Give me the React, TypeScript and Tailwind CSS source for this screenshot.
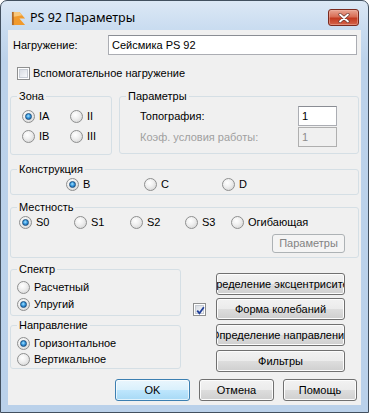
import React from 'react';
import clsx from 'clsx';

const font = "font-['Liberation_Sans',Arial,sans-serif]";

function Radio({ checked, label, className }: { checked?: boolean; label: string; className?: string }) {
  return (
    <div className={clsx('flex items-center h-[13px] shrink-0', className)}>
      <span className="w-[13px] h-[13px] rounded-full border border-[#8e8f8f] bg-[radial-gradient(circle_at_40%_35%,#ffffff_0%,#f0f0f0_40%,#cfcfcf_100%)] flex items-center justify-center shrink-0">
        {checked && (
          <span className="w-[7px] h-[7px] rounded-full border border-[#1c5180] bg-[radial-gradient(circle_at_45%_40%,#a8e4ff_0%,#3a9be0_45%,#0e4f9a_100%)]" />
        )}
      </span>
      <span className="ml-[4px] leading-[13px] whitespace-nowrap">{label}</span>
    </div>
  );
}

function Check({ checked, label, className }: { checked?: boolean; label?: string; className?: string }) {
  return (
    <div className={clsx('flex items-center h-[13px] shrink-0', className)}>
      <span className="w-[13px] h-[13px] border border-[#8e8f8f] bg-white p-[1px] shrink-0">
        <span className="block w-full h-full border border-[#c6cbd3] bg-[linear-gradient(135deg,#d9dde3,#f7f8fa)] relative">
          {checked && (
            <svg viewBox="0 0 9 9" className="absolute left-0 top-0 w-[9px] h-[9px]">
              <path d="M1.2 4.6 L3.4 7.2 L7.8 1.2" fill="none" stroke="#21409a" strokeWidth="1.8" />
            </svg>
          )}
        </span>
      </span>
      {label && <span className="ml-[3px] leading-[13px] whitespace-nowrap">{label}</span>}
    </div>
  );
}

function Group({ title, className, children }: { title: string; className?: string; children?: React.ReactNode }) {
  return (
    <fieldset className={clsx('border border-[#d5dfe5] rounded-[3px] min-w-0', className)}>
      <legend className="ml-[6px] px-[2px] leading-[13px]">{title}</legend>
      {children}
    </fieldset>
  );
}

function Btn({ children, className, disabled, primary }: { children: React.ReactNode; className?: string; disabled?: boolean; primary?: boolean }) {
  return (
    <div
      className={clsx(
        'flex items-center justify-center overflow-hidden whitespace-nowrap rounded-[3px] border shrink-0',
        disabled
          ? 'border-[#adb2b5] bg-[#f4f4f4] text-[#838383]'
          : primary
          ? 'border-[#3c7fb1] bg-[linear-gradient(to_bottom,#eaf6fd_0%,#d9f0fc_50%,#bee6fd_51%,#a7d9f5_100%)] shadow-[inset_0_0_0_1px_#ffffffaa]'
          : 'border-[#707070] bg-[linear-gradient(to_bottom,#f2f2f2_0%,#ebebeb_50%,#dddddd_51%,#cfcfcf_100%)] shadow-[inset_0_0_0_1px_#fcfcfc]',
        className
      )}
    >
      {children}
    </div>
  );
}

export default function App() {
  return (
    <div className={clsx('w-[369px] h-[413px] text-[11px] text-black', font)}>
      <div className="w-full h-full rounded-t-[7px] border border-[#42505f] bg-[linear-gradient(to_bottom,#dce8f5_0px,#c9dcf0_28px,#bcd2ea_60px,#bad1ea_100%)] flex flex-col">
        {/* title bar */}
        <div className="h-[29px] flex items-start shrink-0">
          <svg viewBox="0 0 16 16" className="w-[15px] h-[15px] ml-[10px] mt-[10px]">
            <rect x="1" y="1" width="3" height="14" fill="#b06a2a" />
            <polygon points="3,1 9,1 15,8 9,8 15,15 3,15" fill="#f19a2c" />
            <polygon points="3,1 9,1 12,4.5 3,6" fill="#f8c77b" />
          </svg>
          <span className="ml-[4px] mt-[10px] text-[12.5px] leading-[14px] font-['Noto_Sans',sans-serif] text-black">PS 92 Параметры</span>
          <div className="ml-auto mr-[9px] mt-[8px] w-[31px] h-[17px] rounded-[3px] border border-[#7a2a1e] bg-[linear-gradient(to_bottom,#e9a593_0%,#d86d55_45%,#c23a20_55%,#d5654b_100%)] flex items-center justify-center shadow-[inset_0_0_0_1px_#f0b8aa80]">
            <svg viewBox="0 0 12 10" className="w-[12px] h-[10px]">
              <path d="M2 1.5 L10 8.5 M10 1.5 L2 8.5" stroke="#6b3a33" strokeWidth="3.2" strokeLinecap="round" />
              <path d="M2 1.5 L10 8.5 M10 1.5 L2 8.5" stroke="#ffffff" strokeWidth="1.8" strokeLinecap="round" />
            </svg>
          </div>
        </div>

        {/* client area */}
        <div className="flex-1 mx-[7px] mb-[7px] bg-[#f0f0f0] flex flex-col">
          <div className="flex items-center mt-[5px] pl-[5px] h-[20px]">
            <span className="w-[95px]">Нагружение:</span>
            <div className="w-[249px] h-[20px] border border-[#abadb3] border-t-[#8a8d94] bg-white flex items-center pl-[3px]">Сейсмика PS 92</div>
          </div>

          <Check label="Вспомогательное нагружение" className="mt-[12px] ml-[9px]" />

          <div className="flex mt-[10px] mx-[2px] gap-[7px] items-start">
            <Group title="Зона" className="w-[102px] pb-[11px]">
              <div className="flex flex-col gap-[7px] mt-[7px] pl-[11px]">
                <div className="flex">
                  <Radio checked label="IA" className="w-[48px]" />
                  <Radio label="II" />
                </div>
                <div className="flex">
                  <Radio label="IB" className="w-[48px]" />
                  <Radio label="III" />
                </div>
              </div>
            </Group>
            <Group title="Параметры" className="w-[240px] pb-[6px]">
              <div className="flex flex-col gap-[1px] mt-[3px] pl-[20px]">
                <div className="flex items-center">
                  <span className="w-[158px]">Топография:</span>
                  <div className="w-[39px] h-[20px] border border-[#abadb3] border-t-[#8a8d94] bg-white flex items-center pl-[3px]">1</div>
                </div>
                <div className="flex items-center">
                  <span className="w-[158px] text-[#a0a0a0]">Коэф. условия работы:</span>
                  <div className="w-[39px] h-[20px] border border-[#afafaf] bg-[#f0f0f0] text-[#8d8d8d] flex items-center pl-[3px]">1</div>
                </div>
              </div>
            </Group>
          </div>

          <Group title="Конструкция" className="mt-[8px] mx-[2px] pb-[3px]">
            <div className="flex mt-[2px] pl-[55px]">
              <Radio checked label="B" className="w-[78px]" />
              <Radio label="C" className="w-[78px]" />
              <Radio label="D" />
            </div>
          </Group>

          <Group title="Местность" className="mt-[6px] mx-[2px] pb-[4px]">
            <div className="flex mt-[2px] pl-[8px]">
              <Radio checked label="S0" className="w-[55px]" />
              <Radio label="S1" className="w-[56px]" />
              <Radio label="S2" className="w-[55px]" />
              <Radio label="S3" className="w-[46px]" />
              <Radio label="Огибающая" />
            </div>
            <div className="flex justify-end pr-[13px] mt-[5px]">
              <Btn disabled className="w-[73px] h-[19px]">Параметры</Btn>
            </div>
          </Group>

          <div className="flex mt-[5px] ml-[2px] items-start">
            <div className="w-[171px] flex flex-col gap-[3px]">
              <Group title="Спектр" className="pb-[4px]">
                <div className="flex flex-col gap-[4px] mt-[5px] pl-[6px]">
                  <Radio label="Расчетный" />
                  <Radio checked label="Упругий" />
                </div>
              </Group>
              <Group title="Направление" className="pb-[2px]">
                <div className="flex flex-col gap-[3px] mt-[5px] pl-[6px]">
                  <Radio checked label="Горизонтальное" />
                  <Radio label="Вертикальное" />
                </div>
              </Group>
            </div>
            <Check checked className="ml-[12px] mt-[40px]" />
            <div className="ml-[10px] mt-[10px] flex flex-col">
              <Btn className="w-[129px] h-[22px]">Определение эксцентриситета</Btn>
              <Btn className="w-[129px] h-[22px] mt-[3px]">Форма колебаний</Btn>
              <Btn className="w-[129px] h-[22px] mt-[4px]">Определение направления</Btn>
              <Btn className="w-[129px] h-[22px] mt-[4px]">Фильтры</Btn>
            </div>
          </div>

          <div className="flex justify-end mt-[7px] pr-[4px]">
            <Btn primary className="w-[75px] h-[22px]">OK</Btn>
            <Btn className="w-[75px] h-[22px] ml-[9px]">Отмена</Btn>
            <Btn className="w-[74px] h-[22px] ml-[9px]">Помощь</Btn>
          </div>
        </div>
      </div>
    </div>
  );
}
